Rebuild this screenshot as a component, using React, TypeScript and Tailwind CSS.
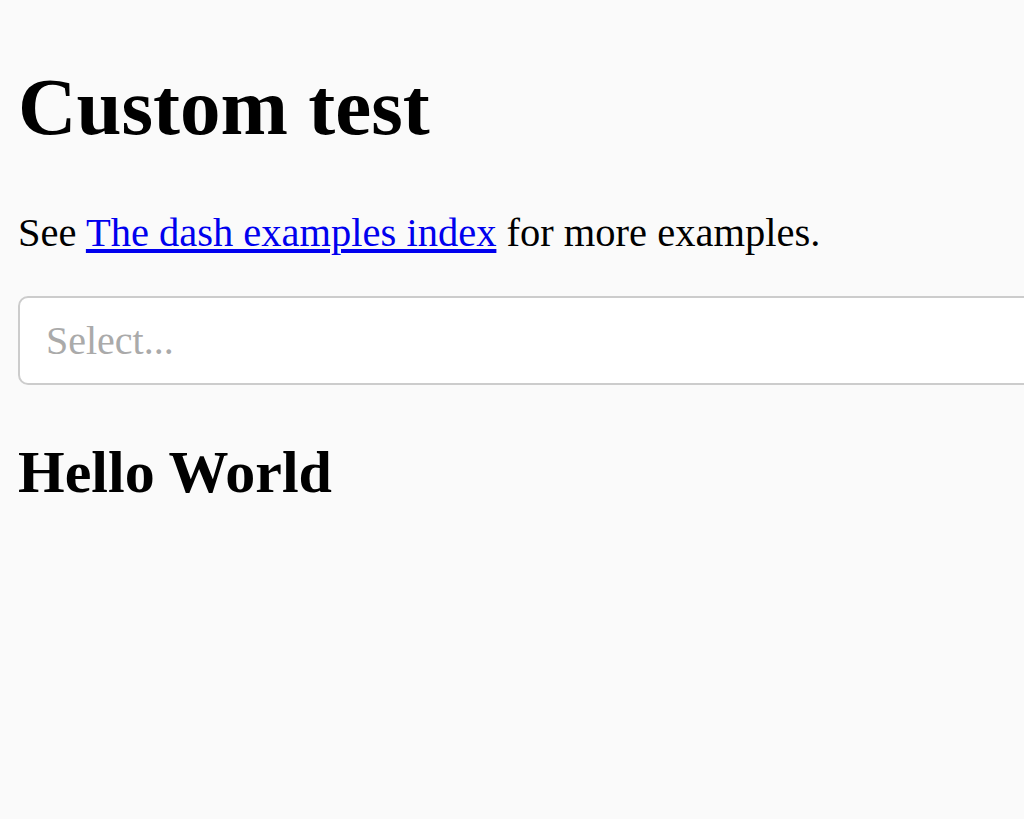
import React from "react";

const serif = "font-['Liberation_Serif','Times_New_Roman',serif]";

const App = () => {
    return (
        <div className={`min-h-[819px] w-full overflow-hidden bg-[#fafafa] pl-[18px] pt-[63px] text-black ${serif}`}>
            <h1 className="text-[81px] font-bold leading-[89px]">Custom test</h1>

            <p className="mt-[59px] text-[40.5px] leading-[44px] whitespace-nowrap">
                See{" "}
                <a href="#" className="text-[#0000ee] underline">
                    The dash examples index
                </a>{" "}
                for more examples.
            </p>

            {/* dropdown control, runs off the right edge */}
            <div className="mt-[41px] flex h-[89px] w-[1100px] items-center rounded-[10px] border-2 border-[#cccccc] bg-white pl-[26px]">
                <span className="text-[40px] leading-[44px] text-[#aaaaaa]">Select...</span>
            </div>

            <h2 className="mt-[53px] text-[60px] font-bold leading-[69px]">Hello World</h2>
        </div>
    );
};

export default App;
